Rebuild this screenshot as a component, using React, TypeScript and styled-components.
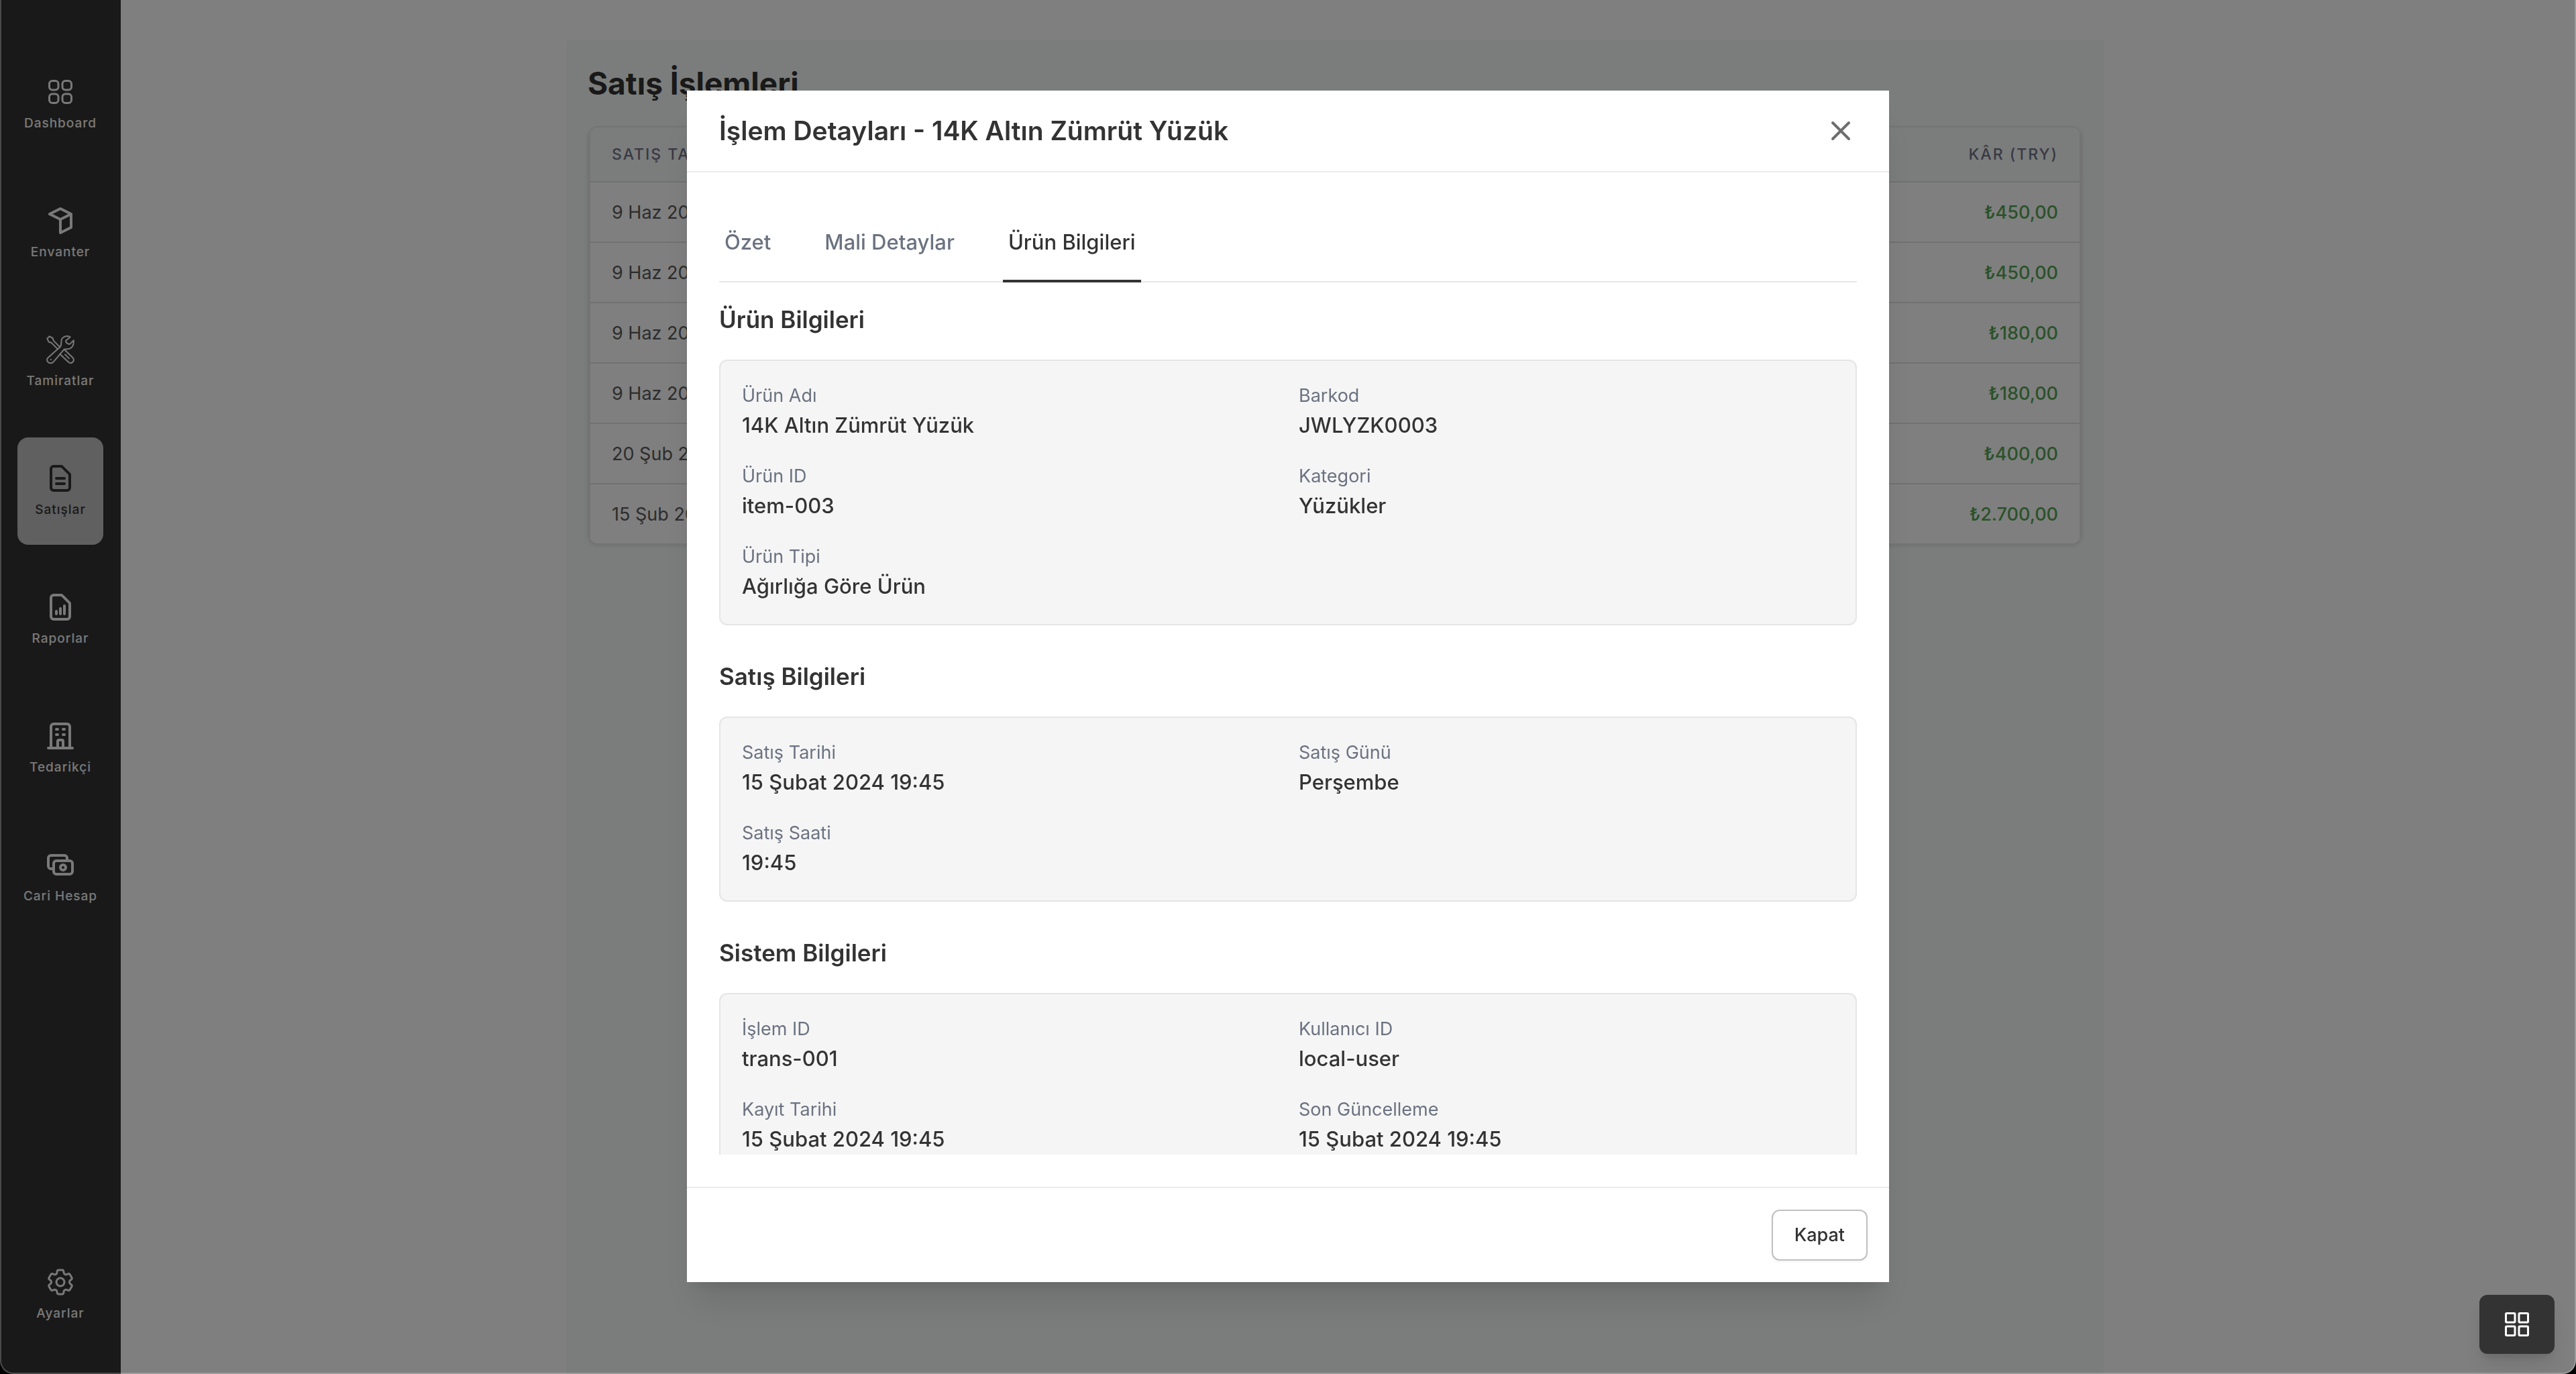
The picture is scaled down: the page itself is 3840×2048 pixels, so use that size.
import React from "react";
import styled, { createGlobalStyle, css } from "styled-components";
import {
  HiOutlineCash,
  HiOutlineDocumentReport,
  HiOutlineDocumentText,
  HiOutlineOfficeBuilding,
  HiOutlineX,
} from "react-icons/hi";
import { HiOutlineCog6Tooth, HiOutlineSquares2X2 } from "react-icons/hi2";

const GlobalStyle = createGlobalStyle`
  *, *::before, *::after { box-sizing: border-box; }
  body {
    margin: 0;
    background: #ffffff;
    color: #333333;
    font-family: Inter, "Noto Sans", sans-serif;
    -webkit-font-smoothing: antialiased;
  }
  h1, h2, h3, dl, dt, dd { margin: 0; }
  button { font-family: inherit; cursor: pointer; }
`;

const Shell = styled.div`
  display: flex;
  height: 100vh;
  overflow: hidden;
`;

const Sidebar = styled.nav`
  display: flex;
  flex-direction: column;
  justify-content: space-between;
  align-items: center;
  flex: none;
  width: 180px;
  padding: 76px 0 38px;
  background: #333333;
`;

const NavList = styled.div`
  display: flex;
  flex-direction: column;
  gap: 32px;
`;

const NavLink = styled.a<{ $active?: boolean }>`
  display: flex;
  flex-direction: column;
  align-items: center;
  justify-content: center;
  gap: 8px;
  width: 128px;
  height: 160px;
  border-radius: 16px;
  color: #f2f2f2;
  font-size: 19px;
  font-weight: 500;
  line-height: 30px;
  letter-spacing: 1px;
  white-space: nowrap;
  text-decoration: none;
  ${(p) =>
    p.$active &&
    css`
      background: #c0c0c0;
      color: #333333;
    `}
  svg {
    width: 48px;
    height: 48px;
  }
`;

const Main = styled.main`
  display: flex;
  justify-content: center;
  flex: 1;
  min-width: 0;
  padding: 60px 40px 0 0;
`;

const Page = styled.section`
  width: 100%;
  max-width: 2292px;
  padding: 32px;
  background: #f6fbf8;
`;

const PageTitle = styled.h1`
  margin-bottom: 32px;
  font-size: 46px;
  font-weight: 700;
  line-height: 64px;
`;

const TableCard = styled.div`
  overflow: hidden;
  border: 2px solid #e6e6e6;
  border-radius: 16px;
  box-shadow: 0 2px 6px rgba(0, 0, 0, 0.1);
`;

const SalesTable = styled.table`
  width: 100%;
  border-collapse: separate;
  border-spacing: 0;
  border: solid #e6e6e6;
  border-width: 0 2px;
  background: #ffffff;
`;

const HeadCell = styled.th<{ $right?: boolean }>`
  height: 82px;
  padding: 0 32px;
  border-bottom: 2px solid #e2e2e2;
  background: #f6fbf8;
  color: #72728a;
  font-size: 23px;
  font-weight: 500;
  letter-spacing: 2px;
  text-align: ${(p) => (p.$right ? "right" : "left")};
`;

const Cell = styled.td<{ $profit?: boolean }>`
  height: 90px;
  padding: 0 32px;
  border-bottom: 2px solid #e2e2e2;
  color: ${(p) => (p.$profit ? "#54a454" : "#5a5a5a")};
  font-size: 27px;
  font-weight: ${(p) => (p.$profit ? 500 : 400)};
  text-align: ${(p) => (p.$profit ? "right" : "left")};
  tr:last-child & {
    height: 88px;
    border-bottom: 0;
  }
`;

const Overlay = styled.div`
  position: fixed;
  inset: 0;
  display: flex;
  align-items: center;
  justify-content: center;
  padding-bottom: 2px;
  background: rgba(0, 0, 0, 0.5);
`;

const Modal = styled.div`
  display: flex;
  flex-direction: column;
  width: 100%;
  max-width: 1792px;
  max-height: calc(100vh - 272px);
  background: #ffffff;
  box-shadow: 0 40px 50px -10px rgba(0, 0, 0, 0.1),
    0 16px 20px -12px rgba(0, 0, 0, 0.1);
`;

const ModalHeader = styled.header`
  display: flex;
  align-items: center;
  justify-content: space-between;
  flex: none;
  height: 122px;
  padding: 0 48px;
  border-bottom: 2px solid #ebebeb;
`;

const ModalTitle = styled.h2`
  font-size: 39px;
  font-weight: 600;
  line-height: 56px;
`;

const CloseButton = styled.button`
  display: flex;
  padding: 0;
  border: 0;
  background: none;
  color: #6e6e6e;
  svg {
    width: 48px;
    height: 48px;
  }
`;

const ModalBody = styled.div`
  display: flex;
  flex-direction: column;
  flex: 1;
  min-height: 0;
  padding: 48px;
`;

const Scroller = styled.div`
  flex: 1;
  min-height: 0;
  overflow-y: auto;
  scrollbar-width: none;
`;

const Tabs = styled.div`
  display: flex;
  gap: 64px;
  box-shadow: inset 0 -2px 0 #e5e7eb;
`;

const Tab = styled.button<{ $active?: boolean }>`
  padding: 32px 8px;
  border: 0;
  border-bottom: 4px solid ${(p) => (p.$active ? "#333333" : "transparent")};
  background: none;
  color: ${(p) => (p.$active ? "#333333" : "#6b7280")};
  font-size: 31px;
  font-weight: 500;
  line-height: 48px;
`;

const Sections = styled.div`
  display: flex;
  flex-direction: column;
  gap: 48px;
  padding-top: 27px;
`;

const SectionTitle = styled.h3`
  margin-bottom: 32px;
  font-size: 35px;
  font-weight: 600;
  line-height: 56px;
`;

const FieldGrid = styled.dl`
  display: grid;
  grid-template-columns: 1fr 1fr;
  gap: 32px;
  padding: 32px;
  border: 2px solid #e5e5e5;
  border-radius: 12px;
  background: #f5f5f5;
`;

const FieldLabel = styled.dt`
  color: #6b7280;
  font-size: 27px;
  line-height: 40px;
`;

const FieldValue = styled.dd`
  font-size: 31px;
  font-weight: 500;
  line-height: 48px;
`;

const ModalFooter = styled.footer`
  display: flex;
  justify-content: flex-end;
  flex: none;
  padding: 32px;
  border-top: 2px solid #ebebeb;
`;

const SecondaryButton = styled.button`
  padding: 16px 32px;
  border: 2px solid #c0c0c0;
  border-radius: 12px;
  background: #ffffff;
  box-shadow: 0 2px 4px rgba(0, 0, 0, 0.05);
  color: #333333;
  font-size: 27px;
  font-weight: 500;
  line-height: 40px;
`;

const QuickMenuButton = styled.button`
  position: fixed;
  right: 32px;
  bottom: 30px;
  display: flex;
  align-items: center;
  justify-content: center;
  width: 112px;
  height: 88px;
  padding: 0;
  border: 0;
  border-radius: 12px;
  background: #333333;
  box-shadow: 0 20px 30px -6px rgba(0, 0, 0, 0.1),
    0 8px 12px -4px rgba(0, 0, 0, 0.1);
  color: #ffffff;
  svg {
    width: 48px;
    height: 48px;
  }
`;

const WindowFrame = styled.div`
  position: fixed;
  inset: 0;
  border: 2px solid rgba(255, 255, 255, 0.22);
  border-top: 0;
  border-radius: 0 0 20px 20px;
  box-shadow: 0 0 0 20px #000000;
  pointer-events: none;
`;

const BoxIcon = () => (
  <svg
    viewBox="0 0 24 24"
    fill="none"
    stroke="currentColor"
    strokeWidth="2"
    strokeLinecap="round"
    strokeLinejoin="round"
    aria-hidden="true"
  >
    <path d="M20 7l-8-4-8 4m16 0l-8 4m8-4v10l-8 4m0-10L4 7m8 4v10" />
  </svg>
);

const ToolsIcon = () => (
  <svg
    viewBox="138 620 144 144"
    fill="none"
    stroke="currentColor"
    strokeWidth="6"
    strokeLinecap="round"
    strokeLinejoin="round"
    aria-hidden="true"
  >
    <path d="M161 633L151 643L158 658L169 661L198 690M161 633L176 641L179 652L208 681" />
    <path d="M254 636C238 627 215 635 214 655C213 667 216 674 207 682L155 728C145 738 153 753 166 753C173 753 177 750 181 745L220 699C225 690 231 690 240 690C261 690 272 672 269 651L253 667C246 670 232 661 235 652Z" />
    <path d="M227 691L266 729C276 742 261 759 247 749L208 712" />
    <path d="M231 714L249 732" />
    <path d="M167 737h1" />
  </svg>
);

const GridIcon = () => (
  <svg
    viewBox="0 0 24 24"
    fill="none"
    stroke="currentColor"
    strokeWidth="1.5"
    aria-hidden="true"
  >
    {[3.75, 13.5].map((x) =>
      [3.75, 13.5].map((y) => (
        <rect key={`${x}-${y}`} x={x} y={y} width="6.75" height="6.75" rx="0.6" />
      ))
    )}
  </svg>
);

const navItems = [
  { label: "Dashboard", icon: <HiOutlineSquares2X2 /> },
  { label: "Envanter", icon: <BoxIcon /> },
  { label: "Tamiratlar", icon: <ToolsIcon /> },
  { label: "Satışlar", icon: <HiOutlineDocumentText />, active: true },
  { label: "Raporlar", icon: <HiOutlineDocumentReport /> },
  { label: "Tedarikçi", icon: <HiOutlineOfficeBuilding /> },
  { label: "Cari Hesap", icon: <HiOutlineCash /> },
];

const sales = [
  { date: "9 Haz 2025", profit: "₺450,00" },
  { date: "9 Haz 2025", profit: "₺450,00" },
  { date: "9 Haz 2025", profit: "₺180,00" },
  { date: "9 Haz 2025", profit: "₺180,00" },
  { date: "20 Şub 2024", profit: "₺400,00" },
  { date: "15 Şub 2024", profit: "₺2.700,00" },
];

const tabs = ["Özet", "Mali Detaylar", "Ürün Bilgileri"];

const sections = [
  {
    title: "Ürün Bilgileri",
    fields: [
      ["Ürün Adı", "14K Altın Zümrüt Yüzük"],
      ["Barkod", "JWLYZK0003"],
      ["Ürün ID", "item-003"],
      ["Kategori", "Yüzükler"],
      ["Ürün Tipi", "Ağırlığa Göre Ürün"],
    ],
  },
  {
    title: "Satış Bilgileri",
    fields: [
      ["Satış Tarihi", "15 Şubat 2024 19:45"],
      ["Satış Günü", "Perşembe"],
      ["Satış Saati", "19:45"],
    ],
  },
  {
    title: "Sistem Bilgileri",
    fields: [
      ["İşlem ID", "trans-001"],
      ["Kullanıcı ID", "local-user"],
      ["Kayıt Tarihi", "15 Şubat 2024 19:45"],
      ["Son Güncelleme", "15 Şubat 2024 19:45"],
    ],
  },
];

export default function App() {
  return (
    <>
      <GlobalStyle />
      <Shell>
        <Sidebar>
          <NavList>
            {navItems.map((item) => (
              <NavLink key={item.label} href="#" $active={item.active}>
                {item.icon}
                {item.label}
              </NavLink>
            ))}
          </NavList>
          <NavLink href="#">
            <HiOutlineCog6Tooth />
            Ayarlar
          </NavLink>
        </Sidebar>
        <Main>
          <Page>
            <PageTitle>Satış İşlemleri</PageTitle>
            <TableCard>
              <SalesTable>
                <thead>
                  <tr>
                    <HeadCell>SATIŞ TARİHİ</HeadCell>
                    <HeadCell $right>KÂR (TRY)</HeadCell>
                  </tr>
                </thead>
                <tbody>
                  {sales.map((sale, i) => (
                    <tr key={i}>
                      <Cell>{sale.date}</Cell>
                      <Cell $profit>{sale.profit}</Cell>
                    </tr>
                  ))}
                </tbody>
              </SalesTable>
            </TableCard>
          </Page>
        </Main>
      </Shell>
      <Overlay>
        <Modal role="dialog" aria-modal="true" aria-labelledby="modal-title">
          <ModalHeader>
            <ModalTitle id="modal-title">
              İşlem Detayları - 14K Altın Zümrüt Yüzük
            </ModalTitle>
            <CloseButton type="button" aria-label="Kapat">
              <HiOutlineX />
            </CloseButton>
          </ModalHeader>
          <ModalBody>
            <Scroller>
              <Tabs role="tablist">
                {tabs.map((tab, i) => (
                  <Tab
                    key={tab}
                    type="button"
                    role="tab"
                    aria-selected={i === 2}
                    $active={i === 2}
                  >
                    {tab}
                  </Tab>
                ))}
              </Tabs>
              <Sections>
                {sections.map((section) => (
                  <section key={section.title}>
                    <SectionTitle>{section.title}</SectionTitle>
                    <FieldGrid>
                      {section.fields.map(([label, value]) => (
                        <div key={label}>
                          <FieldLabel>{label}</FieldLabel>
                          <FieldValue>{value}</FieldValue>
                        </div>
                      ))}
                    </FieldGrid>
                  </section>
                ))}
              </Sections>
            </Scroller>
          </ModalBody>
          <ModalFooter>
            <SecondaryButton type="button">Kapat</SecondaryButton>
          </ModalFooter>
        </Modal>
      </Overlay>
      <QuickMenuButton type="button" aria-label="Hızlı menü">
        <GridIcon />
      </QuickMenuButton>
      <WindowFrame />
    </>
  );
}
